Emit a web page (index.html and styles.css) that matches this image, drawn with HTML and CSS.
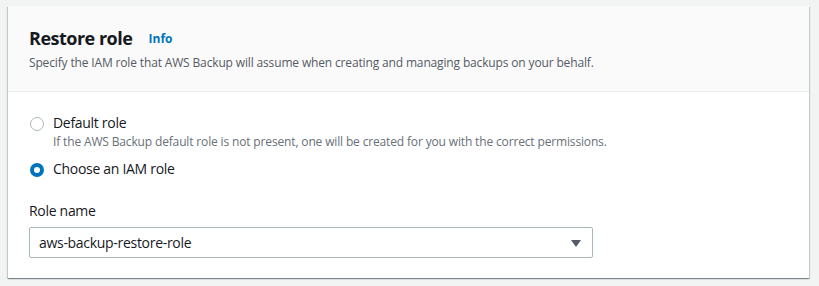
FILE: index.html
```html
<!doctype html>
<html>
<head>
    <meta charset="utf-8">
    <title>Restore role</title>
    <link rel="stylesheet" href="styles.css">
</head>
<body class="page">
<div class="container">
    <div class="container-header">
        <h2 class="container-title">Restore role <a class="info-link" href="#">Info</a></h2>
        <p class="container-description">Specify the IAM role that AWS Backup will assume when creating and managing backups on your behalf.</p>
    </div>

    <div class="container-body">
        <div class="radio-group">
            <label class="radio">
                <span class="radio-control"></span>
                <span class="radio-text">
                    <span class="radio-label">Default role</span>
                    <span class="radio-description">If the AWS Backup default role is not present, one will be created for you with the correct permissions.</span>
                </span>
            </label>
            <label class="radio">
                <span class="radio-control radio-checked"></span>
                <span class="radio-text">
                    <span class="radio-label">Choose an IAM role</span>
                </span>
            </label>
        </div>

        <div class="form-field">
            <div class="form-label">Role name</div>
            <div class="select">
                <span class="select-value">aws-backup-restore-role</span>
                <svg class="select-caret" width="12" height="12" viewBox="0 0 12 12">
                    <path d="M1 3 L11 3 L6 10 Z" fill="#545b64"/>
                </svg>
            </div>
        </div>
    </div>
</div>
</body>
</html>
```

FILE: styles.css
```css
.page {
    margin: 0;
    padding: 6px 10px 8px 8px;
    background: #f2f3f3;
    font-family: "Open Sans", sans-serif;
    color: #16191f;
}

/* card */
.container {
    background: #fff;
    box-shadow: 0 1px 1px 0 rgba(0, 28, 36, 0.3), 1px 1px 1px 0 rgba(0, 28, 36, 0.15), -1px 1px 1px 0 rgba(0, 28, 36, 0.15);
}

.container-header {
    background: #fafafa;
    border-bottom: 1px solid #eaeded;
    padding: 20px 20px 18px 21px;
}

.container-title {
    margin: 0;
    font-size: 18px;
    line-height: 24px;
    font-weight: 700;
    letter-spacing: -0.5px;
}

.info-link {
    margin-left: 12px;
    font-size: 12px;
    font-weight: 700;
    letter-spacing: 0;
    color: #0073bb;
    text-decoration: none;
    vertical-align: 2px;
}

.container-description {
    margin: 2px 0 0;
    font-size: 12px;
    line-height: 20px;
    letter-spacing: -0.15px;
    color: #545b64;
}

.container-body {
    padding: 20px 20px 20px 21px;
}

/* radios */
.radio {
    display: flex;
    align-items: flex-start;
    margin-bottom: 8px;
}

.radio-control {
    flex: none;
    width: 12px;
    height: 12px;
    margin: 5px 9px 0 1px;
    border: 1px solid #aab7b8;
    border-radius: 50%;
    background: #fff;
}

.radio-checked {
    width: 6px;
    height: 6px;
    border: 4px solid #0073bb;
}

.radio-text {
    display: flex;
    flex-direction: column;
}

.radio-label {
    font-size: 14px;
    line-height: 22px;
    letter-spacing: -0.3px;
}

.radio-description {
    font-size: 12px;
    line-height: 16px;
    letter-spacing: -0.15px;
    color: #687078;
}

/* select */
.form-field {
    margin-top: 20px;
}

.form-label {
    font-size: 14px;
    line-height: 22px;
    letter-spacing: -0.3px;
    margin-bottom: 5px;
}

.select {
    width: 564px;
    height: 31px;
    box-sizing: border-box;
    border: 1px solid #aab7b8;
    border-radius: 2px;
    display: flex;
    align-items: center;
    justify-content: space-between;
    padding: 0 10px 0 9px;
    font-size: 14px;
    letter-spacing: -0.3px;
}

.select-caret {
    flex: none;
}
```
